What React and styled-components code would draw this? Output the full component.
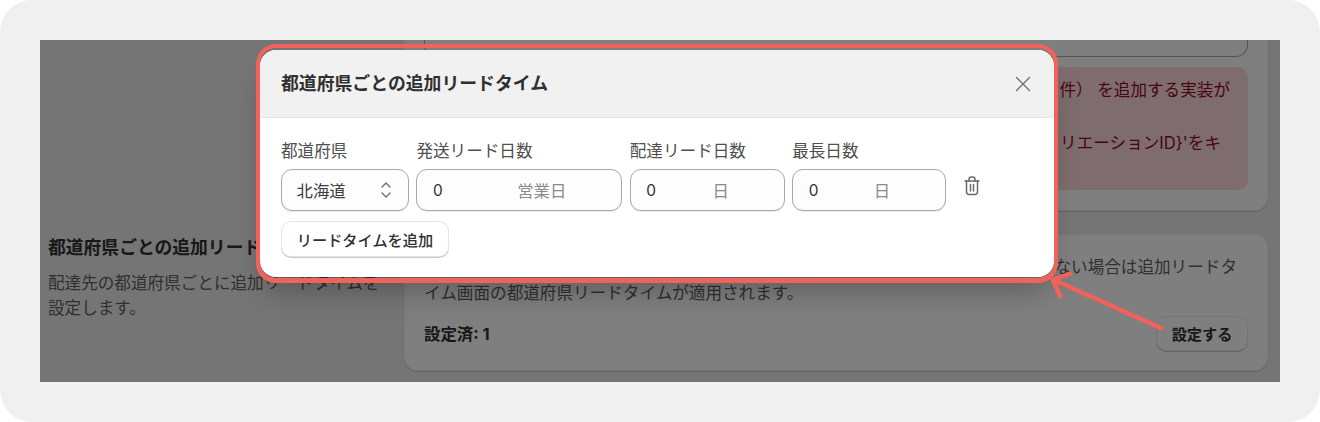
import React from "react";
import styled, { createGlobalStyle } from "styled-components";

const Global = createGlobalStyle`
  html, body { margin: 0; padding: 0; background: #fff; }
  * { box-sizing: border-box; }
  body { font-family: Inter, "Noto Sans CJK JP", sans-serif; color: #303030; }
`;
const Frame = styled.div`
  position: relative; width: 1320px; height: 422px; padding: 40px;
  background: #f0f0f0; border-radius: 32px; overflow: hidden;
`;
const Screen = styled.div`
  position: relative; width: 1240px; height: 342px; overflow: hidden; background: #ebebeb;
`;
const Page = styled.div`
  display: grid; grid-template-columns: 364px 864px; grid-template-rows: 342px; height: 342px;
`;
const Intro = styled.div`
  padding: 195px 0 0 8px;
`;
const IntroTitle = styled.h2`
  margin: 0 0 11px; font-size: 17.8px; line-height: 25px; font-weight: 700; white-space: nowrap; color: #303030;
`;
const IntroText = styled.p`
  margin: 0; width: 340px; font-size: 16.6px; line-height: 25px; color: #616161;
`;
const Side = styled.div`
  display: flex; flex-direction: column; justify-content: flex-end; gap: 23px; height: 342px; padding-bottom: 11px;
`;
const Card = styled.section`
  flex: none; background: #fff; border-radius: 14px; padding: ${p => p.$pad || "20px"};
  box-shadow: 0 1px 0 rgba(0,0,0,.16), inset 0 0 0 1px rgba(0,0,0,.06);
`;
const InnerBox = styled.div`
  height: 40px; border: 1px solid #a8a8a8; border-top: 0; border-radius: 0 0 12px 12px;
  margin-bottom: 10px;
`;
const Banner = styled.div`
  height: 123px; border-radius: 10px; background: #fdd9dc; padding: 10px 18px 0;
  color: #8e0b21; font-size: 16.6px; line-height: 26px;
`;
const BannerLine = styled.div`
  display: flex; justify-content: flex-end; white-space: nowrap; height: 26px;
  padding-right: ${p => p.$end || 0}px; margin-bottom: 27px;
`;
const CardText = styled.p`
  margin: 0; font-size: 16.6px; line-height: 26px; color: #616161; white-space: nowrap;
`;
const CardRight = styled(CardText)`
  text-align: right; padding-right: 11px;
`;
const CardFoot = styled.div`
  display: flex; align-items: center; justify-content: space-between; margin-top: 10px;
`;
const Strong = styled.span`
  font-size: 16.4px; font-weight: 700; color: #303030; padding-bottom: 2px;
`;
const GhostButton = styled.div`
  width: 92px; height: 35px; padding-bottom: 2px; display: flex; align-items: center; justify-content: center;
  border-radius: 10px; background: #fff; font-size: 15.2px; font-weight: 600; color: #303030;
  box-shadow: 0 1px 0 rgba(0,0,0,.2), inset 0 0 0 1px rgba(0,0,0,.08);
`;
const Scrim = styled.div`
  position: absolute; inset: 0; background: rgba(0,0,0,.5);
`;
const Modal = styled.div`
  position: absolute; left: 220px; top: 10px; width: 794px; height: 227px;
  background: #fff; border-radius: 16px; overflow: hidden;
`;
const ModalShadow = styled.div`
  position: absolute; left: 220px; top: 10px; width: 794px; height: 227px; border-radius: 16px;
  box-shadow: 0 20px 30px -6px rgba(0,0,0,.26);
`;
const ModalHead = styled.header`
  height: 68px; display: flex; align-items: center; justify-content: space-between;
  padding: 1px 23px 0 21px; background: #f1f1f1; border-bottom: 1px solid #e6e6e6;
`;
const ModalTitle = styled.h1`
  margin: 0; font-size: 17.85px; font-weight: 700; line-height: 24px; color: #303030;
`;
const ModalBody = styled.div`
  padding: 23px 21px 20px; display: flex; flex-direction: column; gap: 10px; align-items: flex-start;
`;
const Fields = styled.div`
  display: flex; align-items: flex-end; gap: 7.4px;
`;
const Field = styled.label`
  display: flex; flex-direction: column; gap: 8px; width: ${p => p.$w}px;
`;
const FieldLabel = styled.span`
  font-size: 16.6px; line-height: 20px; color: #4f4f4f; white-space: nowrap;
`;
const Control = styled.div`
  height: 42px; display: flex; align-items: center; justify-content: space-between;
  padding: ${p => p.$pad || "0 55px 0 15.5px"}; border: 1px solid #a9a9a9; border-radius: 11px;
  background: #fdfdfd; font-size: 15.4px; color: #303030; white-space: nowrap;
  box-shadow: 0 1px 0 rgba(0,0,0,.08);
`;
const SelectText = styled.span`
  font-size: 16.4px; color: #3c3c3c;
`;
const Suffix = styled.span`
  font-size: 16.4px; color: #8a8a8a;
`;
const TrashWrap = styled.div`
  align-self: flex-end; height: 42px; margin-left: 10px; padding-top: 7px; color: #6a6a6a;
`;
const AddButton = styled.div`
  width: 168px; height: 36px; display: flex; align-items: center; justify-content: center;
  border-radius: 10px; background: #fff; font-size: 15.2px; font-weight: 500; color: #303030;
  box-shadow: 0 1px 0 rgba(0,0,0,.22), inset 0 0 0 1px rgba(0,0,0,.1);
`;
const Highlight = styled.div`
  position: absolute; left: 256px; top: 44px; width: 802px; height: 239px;
  border: solid #f0625a; border-width: 4px 4px 5px 4px; border-radius: 20px; pointer-events: none;
`;
const Arrow = styled.svg`
  position: absolute; left: 1040px; top: 265px; width: 135px; height: 75px; pointer-events: none;
`;

const Trash = () => (
  <svg width="16" height="20" viewBox="0 0 16 20" fill="none" stroke="currentColor" strokeWidth="1.5" strokeLinecap="round" strokeLinejoin="round">
    <path d="M1 5h14" />
    <path d="M5 5V3.5C5 2.1 6 1 7.3 1h1.4C10 1 11 2.1 11 3.5V5" />
    <path d="M2.5 5v10.5c0 1.7 1.2 3 2.8 3h5.4c1.6 0 2.8-1.3 2.8-3V5" />
    <path d="M6.5 8.5v6.5M9.5 8.5v6.5" />
  </svg>
);
const Chevrons = () => (
  <svg width="12" height="18" viewBox="0 0 12 18" fill="none" stroke="#707070" strokeWidth="1.4" strokeLinecap="round" strokeLinejoin="round">
    <path d="M2 6l4-4 4 4" />
    <path d="M2 12l4 4 4-4" />
  </svg>
);
const Close = () => (
  <svg width="16" height="16" viewBox="0 0 16 16" fill="none" stroke="#6f6f6f" strokeWidth="1.4" strokeLinecap="round">
    <path d="M1.5 1.5l13 13M14.5 1.5l-13 13" />
  </svg>
);

export default function App() {
  return (
    <>
      <Global />
      <Frame>
        <Screen>
          <Page>
            <Intro>
              <IntroTitle>都道府県ごとの追加リードタイム</IntroTitle>
              <IntroText>配達先の都道府県ごとに追加リードタイムを設定します。</IntroText>
            </Intro>
            <Side>
              <Card $pad="0 20px 21px">
                <InnerBox />
                <Banner>
                  <BannerLine $end={0}>件） を追加する実装が</BannerLine>
                  <BannerLine $end={9}>クリエーションID}'をキ</BannerLine>
                </Banner>
              </Card>
              <Card $pad="20px 20px 20px">
                <CardRight>ない場合は追加リードタ</CardRight>
                <CardText>イム画面の都道府県リードタイムが適用されます。</CardText>
                <CardFoot>
                  <Strong>設定済: 1</Strong>
                  <GhostButton>設定する</GhostButton>
                </CardFoot>
              </Card>
            </Side>
          </Page>
          <Scrim />
          <ModalShadow />
          <Modal>
            <ModalHead>
              <ModalTitle>都道府県ごとの追加リードタイム</ModalTitle>
              <Close />
            </ModalHead>
            <ModalBody>
              <Fields>
                <Field $w={128}>
                  <FieldLabel>都道府県</FieldLabel>
                  <Control $pad="0 16px 0 14.5px">
                    <SelectText>北海道</SelectText>
                    <Chevrons />
                  </Control>
                </Field>
                <Field $w={206}>
                  <FieldLabel>発送リード日数</FieldLabel>
                  <Control>
                    <span>0</span>
                    <Suffix>営業日</Suffix>
                  </Control>
                </Field>
                <Field $w={155}>
                  <FieldLabel>配達リード日数</FieldLabel>
                  <Control>
                    <span>0</span>
                    <Suffix>日</Suffix>
                  </Control>
                </Field>
                <Field $w={154}>
                  <FieldLabel>最長日数</FieldLabel>
                  <Control>
                    <span>0</span>
                    <Suffix>日</Suffix>
                  </Control>
                </Field>
                <TrashWrap><Trash /></TrashWrap>
              </Fields>
              <AddButton>リードタイムを追加</AddButton>
            </ModalBody>
          </Modal>
        </Screen>
        <Highlight />
        <Arrow viewBox="0 0 135 75" fill="none" stroke="#f0625a" strokeWidth="4.5" strokeLinecap="butt" strokeLinejoin="miter">
          <path d="M123 64L12 14" />
          <path d="M32 8L13 15L21 33" />
        </Arrow>
      </Frame>
    </>
  );
}
